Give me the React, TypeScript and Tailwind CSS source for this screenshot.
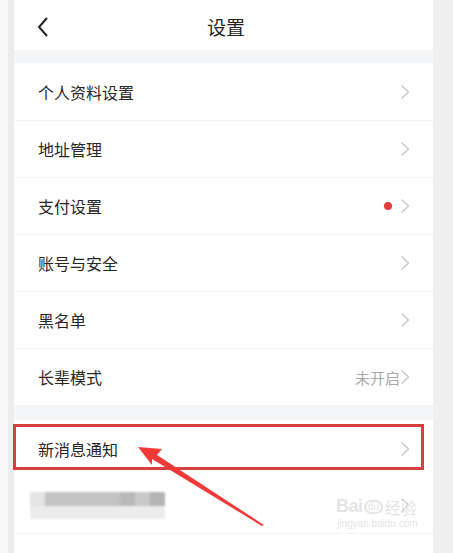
import React from "react";

const Chevron = ({ className = "" }: { className?: string }) => (
  <svg width="10" height="16" viewBox="0 0 10 16" className={className}>
    <path d="M1.5 1.5 L8.5 8 L1.5 14.5" fill="none" stroke="#c8c8c8" strokeWidth="1.4" strokeLinejoin="miter" />
  </svg>
);

const Row = ({ label, right, first }: { label: string; right?: React.ReactNode; first?: boolean }) => (
  <div className={`h-[57px] flex items-center pl-[24px] pr-[23px] bg-white ${first ? "" : "border-t border-[#f3f3f3]"}`}>
    <span className="flex-1 text-[16px] text-[#262626] leading-none">{label}</span>
    {right}
    <Chevron />
  </div>
);

export default function App() {
  return (
    <div
      className="relative w-[453px] h-[553px] overflow-hidden flex bg-[#efefef]"
      style={{ fontFamily: '"Noto Sans CJK SC", "Noto Sans", sans-serif' }}
    >
      <div className="w-[8px] bg-[#f8f8f8]" />
      <div className="w-[6px] bg-[#ececec]" />
      <div className="w-[419px] flex flex-col bg-[#f4f5f7]">
        <div className="h-[50px] bg-white flex items-center relative">
          <svg width="14" height="22" viewBox="0 0 14 22" className="ml-[22px] mt-[4px]">
            <path d="M11 2 L3 11 L11 20" fill="none" stroke="#222" strokeWidth="2" />
          </svg>
          <div className="absolute left-0 right-0 top-0 h-[50px] flex items-center justify-center pointer-events-none">
            <span className="text-[19px] text-[#222] ml-[5px] mt-[4px]">设置</span>
          </div>
        </div>
        <div className="h-[13px]" />
        <div className="flex flex-col">
          <Row first label="个人资料设置" />
          <Row label="地址管理" />
          <Row
            label="支付设置"
            right={<span className="w-[8px] h-[8px] rounded-full bg-[#e03c3f] mr-[8px]" />}
          />
          <Row label="账号与安全" />
          <Row label="黑名单" />
          <Row label="长辈模式" right={<span className="text-[15px] text-[#a8a8a8] leading-none">未开启</span>} />
        </div>
        <div className="h-[15px]" />
        <div className="flex flex-col bg-white flex-1">
          <Row first label="新消息通知" />
          <div className="h-[57px] flex items-center pl-[16px] pr-[23px] border-b border-[#f3f3f3]">
            <div className="flex-1 flex flex-col blur-[1px]">
              <div className="flex h-[14px]">
                <div className="w-[15px] bg-[#e4e4e4]" />
                <div className="w-[75px] bg-[#c4c4c4]" />
                <div className="w-[15px] bg-[#b8b8b8]" />
                <div className="w-[15px] bg-[#c8c8c8]" />
                <div className="w-[15px] bg-[#b4b4b4]" />
              </div>
              <div className="flex h-[13px]">
                <div className="w-[135px] bg-[#ececec]" />
              </div>
            </div>
            <Chevron />
          </div>
        </div>
      </div>

      {/* red highlight box */}
      <div className="absolute left-[13px] top-[424px] w-[411px] h-[46px] border-[3px] border-[#d8403f]" />

      {/* arrow */}
      <svg className="absolute left-0 top-0" width="453" height="553" viewBox="0 0 453 553">
        <polygon points="138,447 162,449 157,455 264,525 262,526 152,459 152,465" fill="#f03a3a" />
      </svg>

      {/* watermark */}
      <div className="absolute left-[336px] top-[497px] flex flex-col items-start text-[#e4e4e4] leading-none">
        <div className="flex items-end">
          <span className="text-[18px] font-bold tracking-tight" style={{ fontFamily: '"Liberation Sans", sans-serif' }}>Bai</span>
          <span className="text-[10px] ml-[1px] mb-[1px] rounded-full border-2 border-[#e4e4e4] px-[2px]" style={{ fontFamily: '"Liberation Sans", sans-serif' }}>du</span>
          <span className="text-[16px] ml-[2px]">经验</span>
        </div>
        <span className="text-[10px] mt-[4px] ml-[1px]" style={{ fontFamily: '"Liberation Sans", sans-serif' }}>jingyan.baidu.com</span>
      </div>
    </div>
  );
}
